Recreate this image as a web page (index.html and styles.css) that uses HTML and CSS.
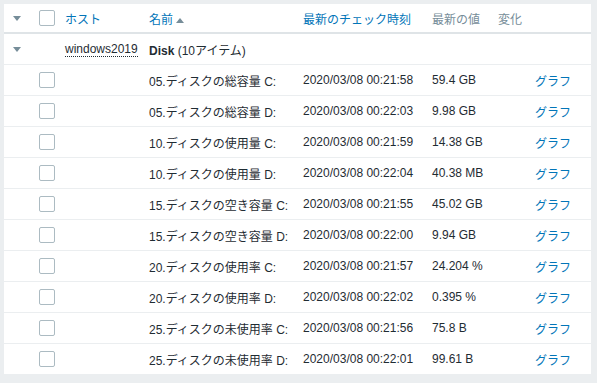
FILE: index.html
```html
<!DOCTYPE html>
<html lang="ja">
<head>
    <meta charset="UTF-8">
    <title>最新データ</title>
    <link rel="stylesheet" href="styles.css">
</head>
<body>
    <div class="panel">
        <table class="list">
            <colgroup>
                <col class="c-toggle">
                <col class="c-check">
                <col class="c-host">
                <col class="c-name">
                <col class="c-time">
                <col class="c-value">
                <col class="c-change">
                <col class="c-graph">
            </colgroup>
            <thead>
                <tr>
                    <th class="toggle"><span class="arrow-down"></span></th>
                    <th class="check"><span class="checkbox"></span></th>
                    <th><a class="link">ホスト</a></th>
                    <th><a class="link">名前</a><span class="arrow-up"></span></th>
                    <th><a class="link">最新のチェック時刻</a></th>
                    <th class="muted">最新の値</th>
                    <th class="muted">変化</th>
                    <th></th>
                </tr>
            </thead>
            <tbody>
                <tr class="group">
                    <td class="toggle"><span class="arrow-down"></span></td>
                    <td></td>
                    <td><span class="host">windows2019</span></td>
                    <td colspan="5"><b>Disk</b> (10アイテム)</td>
                </tr>
                <tr>
                    <td></td><td class="check"><span class="checkbox"></span></td><td></td>
                    <td>05.ディスクの総容量 C:</td><td>2020/03/08 00:21:58</td><td>59.4 GB</td><td></td><td><a class="link">グラフ</a></td>
                </tr>
                <tr>
                    <td></td><td class="check"><span class="checkbox"></span></td><td></td>
                    <td>05.ディスクの総容量 D:</td><td>2020/03/08 00:22:03</td><td>9.98 GB</td><td></td><td><a class="link">グラフ</a></td>
                </tr>
                <tr>
                    <td></td><td class="check"><span class="checkbox"></span></td><td></td>
                    <td>10.ディスクの使用量 C:</td><td>2020/03/08 00:21:59</td><td>14.38 GB</td><td></td><td><a class="link">グラフ</a></td>
                </tr>
                <tr>
                    <td></td><td class="check"><span class="checkbox"></span></td><td></td>
                    <td>10.ディスクの使用量 D:</td><td>2020/03/08 00:22:04</td><td>40.38 MB</td><td></td><td><a class="link">グラフ</a></td>
                </tr>
                <tr>
                    <td></td><td class="check"><span class="checkbox"></span></td><td></td>
                    <td>15.ディスクの空き容量 C:</td><td>2020/03/08 00:21:55</td><td>45.02 GB</td><td></td><td><a class="link">グラフ</a></td>
                </tr>
                <tr>
                    <td></td><td class="check"><span class="checkbox"></span></td><td></td>
                    <td>15.ディスクの空き容量 D:</td><td>2020/03/08 00:22:00</td><td>9.94 GB</td><td></td><td><a class="link">グラフ</a></td>
                </tr>
                <tr>
                    <td></td><td class="check"><span class="checkbox"></span></td><td></td>
                    <td>20.ディスクの使用率 C:</td><td>2020/03/08 00:21:57</td><td>24.204 %</td><td></td><td><a class="link">グラフ</a></td>
                </tr>
                <tr>
                    <td></td><td class="check"><span class="checkbox"></span></td><td></td>
                    <td>20.ディスクの使用率 D:</td><td>2020/03/08 00:22:02</td><td>0.395 %</td><td></td><td><a class="link">グラフ</a></td>
                </tr>
                <tr>
                    <td></td><td class="check"><span class="checkbox"></span></td><td></td>
                    <td>25.ディスクの未使用率 C:</td><td>2020/03/08 00:21:56</td><td>75.8 B</td><td></td><td><a class="link">グラフ</a></td>
                </tr>
                <tr>
                    <td></td><td class="check"><span class="checkbox"></span></td><td></td>
                    <td>25.ディスクの未使用率 D:</td><td>2020/03/08 00:22:01</td><td>99.61 B</td><td></td><td><a class="link">グラフ</a></td>
                </tr>
            </tbody>
        </table>
    </div>
</body>
</html>
```

FILE: styles.css
```css
body {
    margin: 0;
    padding: 4px 6px 0 4px;
    background-color: #ebeef0;
    font-family: "Liberation Sans", Arial, "Noto Sans CJK JP", sans-serif;
    font-size: 12px;
    color: #1f2c33;
}
.panel {
    background-color: #fff;
    width: 587px;
}
.list {
    width: 587px;
    border-collapse: collapse;
    table-layout: fixed;
}
.c-toggle { width: 30px; }
.c-check { width: 26px; }
.c-host { width: 84px; }
.c-name { width: 154px; }
.c-time { width: 129px; }
.c-value { width: 66px; }
.c-change { width: 37px; }
.c-graph { width: 61px; }
th, td {
    padding: 0 0 0 5px;
    text-align: left;
    white-space: nowrap;
    overflow: hidden;
}
th {
    height: 28px;
    font-weight: normal;
    border-bottom: 2px solid #dfe4e7;
}
td {
    height: 30px;
    border-bottom: 1px solid #ebeef0;
}
.toggle {
    padding-left: 9px;
}
.check {
    padding-left: 5px;
}
.muted {
    color: #768d99;
}
.link {
    color: #0275b8;
}
.arrow-down {
    display: inline-block;
    width: 0;
    height: 0;
    border-left: 4px solid transparent;
    border-right: 4px solid transparent;
    border-top: 5px solid #768d99;
    vertical-align: middle;
}
.arrow-up {
    display: inline-block;
    width: 0;
    height: 0;
    margin-left: 3px;
    border-left: 4px solid transparent;
    border-right: 4px solid transparent;
    border-bottom: 5px solid #768d99;
    vertical-align: middle;
}
.checkbox {
    display: block;
    width: 14px;
    height: 14px;
    border: 1px solid #acbbc2;
    border-radius: 2px;
    background: #fff;
}
.host {
    border-bottom: 1px dotted #1f2c33;
}
```
